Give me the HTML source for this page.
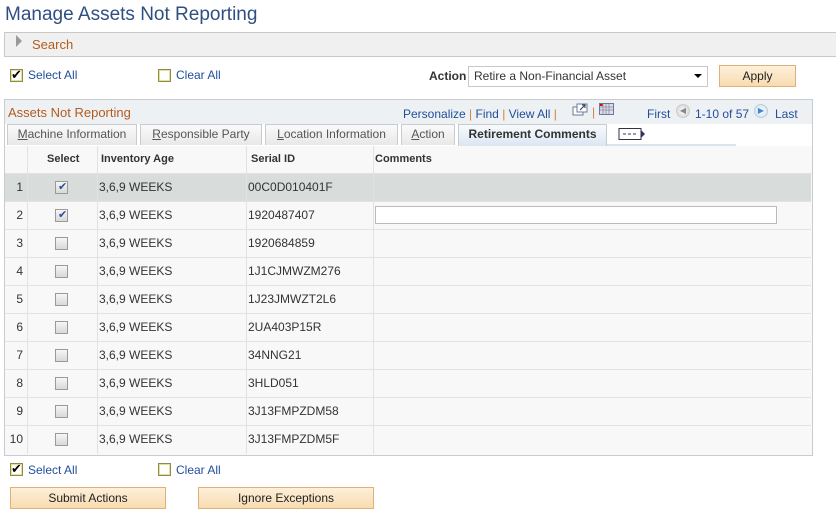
<!DOCTYPE html>
<html><head><style>
*{margin:0;padding:0;box-sizing:border-box}
body{width:836px;height:520px;background:#fff;font-family:"Liberation Sans",Arial,sans-serif;font-size:12px;color:#333;position:relative;overflow:hidden}
.a{position:absolute}
.lnk{color:#1f4e9c}
.cb{position:absolute;width:13px;height:13px;border:1px solid #8a8a5a;background:#fff;box-shadow:inset 0 0 0 1px #e8e08a}
.cb.ck::after{content:"\2714";position:absolute;left:0;top:-3px;font-size:13px;color:#000}
.gcb{position:absolute;width:13px;height:13px;border:1px solid #9a9a9a;background:linear-gradient(#f6f6f6,#d8d8d8)}
.gcb.ck::after{content:"\2714";position:absolute;left:2px;top:-2px;font-size:11px;color:#2a4f9a}
.btn{position:absolute;height:22px;border:1px solid #e0b07a;background:linear-gradient(#fdf0da,#f8dcb0);text-align:center;line-height:20px;color:#222}
.tab{position:absolute;top:124px;height:21px;border:1px solid #c8ccd0;border-bottom:none;background:linear-gradient(#fafafa,#e8e8e8);color:#555;line-height:19px;text-align:center}
.row{position:absolute;left:5px;width:806px;height:28px;border-bottom:1px solid #e2e2e2;background:#f8f8f8}
.row div{position:absolute;top:0;line-height:27px;color:#333}
.row div.n{left:0;width:18px;text-align:right}
.vl{position:absolute;top:146px;width:1px;height:308px;background:#e2e2e2}
</style></head><body>
<div class="a" style="left:5px;top:4px;font-size:19px;color:#2f4f82">Manage Assets Not Reporting</div>
<div class="a" style="left:4px;top:32px;width:832px;height:25px;background:#f0f0f0;border:1px solid #c8c8c8;border-right:none"></div>
<div class="a" style="left:16px;top:35px;width:0;height:0;border-left:6px solid #999;border-top:6px solid transparent;border-bottom:6px solid transparent"></div>
<div class="a" style="left:32px;top:37px;color:#b25c1e;font-size:13px">Search</div>

<div class="cb ck" style="left:10px;top:69px"></div><div class="a lnk" style="left:28px;top:68px">Select All</div>
<div class="cb" style="left:158px;top:69px"></div><div class="a lnk" style="left:176px;top:68px">Clear All</div>
<div class="a" style="left:429px;top:69px;font-weight:bold;color:#333">Action</div>
<div class="a" style="left:468px;top:66px;width:240px;height:21px;border:1px solid #c8c8c8;background:#fff;line-height:19px;padding-left:5px">Retire a Non-Financial Asset</div>
<div class="a" style="left:694px;top:74px;border-left:4px solid transparent;border-right:4px solid transparent;border-top:4px solid #000"></div>
<div class="btn" style="left:719px;top:65px;width:77px">Apply</div>

<div class="a" style="left:4px;top:99px;width:809px;height:357px;border:1px solid #c8ccd0;background:#f8f8f8"></div>
<div class="a" style="left:5px;top:100px;width:807px;height:24px;background:#eef1f3"></div>
<div class="a" style="left:5px;top:124px;width:807px;height:22px;background:#fff"></div>
<div class="a" style="left:8px;top:105px;color:#b25c1e;font-size:13px">Assets Not Reporting</div>
<div class="a lnk" style="left:403px;top:107px"><span>Personalize</span> <span style="color:#d08040">|</span> Find <span style="color:#d08040">|</span> View All <span style="color:#d08040">|</span></div>
<svg class="a" style="left:572px;top:103px" width="16" height="14"><rect x="1" y="4" width="10" height="8" fill="#fff" stroke="#6a7a9a"/><rect x="5" y="1" width="10" height="8" fill="#fff" stroke="#6a7a9a"/><path d="M8 7l5-5M10 2h3v3" stroke="#335" fill="none"/></svg>
<div class="a" style="left:592px;top:105px;color:#d08040">|</div>
<svg class="a" style="left:599px;top:103px" width="15" height="12"><rect x="0.5" y="0.5" width="14" height="11" fill="#dde" stroke="#6a7a9a"/><rect x="1" y="1" width="3" height="2" fill="#e00"/><path d="M1 4h13M1 7h13M4 1v10M7 1v10M10 1v10" stroke="#99a"/></svg>
<div class="a lnk" style="left:647px;top:107px">First</div>
<div class="a" style="left:676px;top:104px;width:14px;height:14px;border-radius:50%;background:radial-gradient(#fff,#ccc);border:1px solid #ccc;font-size:8px;color:#888;text-align:center;line-height:12px">◀</div>
<div class="a lnk" style="left:695px;top:107px">1-10 of 57</div>
<div class="a" style="left:754px;top:104px;width:14px;height:14px;border-radius:50%;background:radial-gradient(#fff,#cde);border:1px solid #bcd;font-size:8px;color:#48c;text-align:center;line-height:12px">▶</div>
<div class="a lnk" style="left:775px;top:107px">Last</div>

<div class="tab" style="left:7px;width:130px"><u>M</u>achine Information</div>
<div class="tab" style="left:140px;width:122px"><u>R</u>esponsible Party</div>
<div class="tab" style="left:265px;width:133px"><u>L</u>ocation Information</div>
<div class="tab" style="left:401px;width:54px"><u>A</u>ction</div>
<div class="tab" style="left:458px;width:149px;background:linear-gradient(#f8fafc,#dbe6f2);font-weight:bold;color:#333;height:22px">Retirement Comments</div>
<div class="a" style="left:607px;top:144px;width:129px;height:2px;background:#dbe4ee"></div>
<svg class="a" style="left:618px;top:127px" width="28" height="14"><rect x="1" y="1.5" width="22" height="11" fill="#fff" stroke="#334"/><path d="M5 7h3M10 7h3M15 7h3" stroke="#335"/><path d="M23 3l4 4-4 4z" fill="#335"/></svg>

<div class="a" style="left:5px;top:146px;width:807px;height:28px;background:#f8f8f8;border-bottom:1px solid #e2e2e2"></div>
<div class="a" style="left:47px;top:153px;font-weight:bold;font-size:11px;color:#333">Select</div>
<div class="a" style="left:101px;top:153px;font-weight:bold;font-size:11px;color:#333">Inventory Age</div>
<div class="a" style="left:251px;top:153px;font-weight:bold;font-size:11px;color:#333">Serial ID</div>
<div class="a" style="left:375px;top:153px;font-weight:bold;font-size:11px;color:#333">Comments</div>

<div class="row" style="top:174px;background:#d8dcdb"><div class="n">1</div><span class="gcb ck" style="left:50px;top:7px"></span><div style="left:94px">3,6,9 WEEKS</div><div style="left:243px">00C0D010401F</div></div>
<div class="row" style="top:202px"><div class="n">2</div><span class="gcb ck" style="left:50px;top:7px"></span><div style="left:94px">3,6,9 WEEKS</div><div style="left:243px">1920487407</div><span style="position:absolute;left:370px;top:4px;width:402px;height:18px;border:1px solid #bbb;background:#fff"></span></div>
<div class="row" style="top:230px"><div class="n">3</div><span class="gcb" style="left:50px;top:7px"></span><div style="left:94px">3,6,9 WEEKS</div><div style="left:243px">1920684859</div></div>
<div class="row" style="top:258px"><div class="n">4</div><span class="gcb" style="left:50px;top:7px"></span><div style="left:94px">3,6,9 WEEKS</div><div style="left:243px">1J1CJMWZM276</div></div>
<div class="row" style="top:286px"><div class="n">5</div><span class="gcb" style="left:50px;top:7px"></span><div style="left:94px">3,6,9 WEEKS</div><div style="left:243px">1J23JMWZT2L6</div></div>
<div class="row" style="top:314px"><div class="n">6</div><span class="gcb" style="left:50px;top:7px"></span><div style="left:94px">3,6,9 WEEKS</div><div style="left:243px">2UA403P15R</div></div>
<div class="row" style="top:342px"><div class="n">7</div><span class="gcb" style="left:50px;top:7px"></span><div style="left:94px">3,6,9 WEEKS</div><div style="left:243px">34NNG21</div></div>
<div class="row" style="top:370px"><div class="n">8</div><span class="gcb" style="left:50px;top:7px"></span><div style="left:94px">3,6,9 WEEKS</div><div style="left:243px">3HLD051</div></div>
<div class="row" style="top:398px"><div class="n">9</div><span class="gcb" style="left:50px;top:7px"></span><div style="left:94px">3,6,9 WEEKS</div><div style="left:243px">3J13FMPZDM58</div></div>
<div class="row" style="top:426px;border-bottom:none"><div class="n">10</div><span class="gcb" style="left:50px;top:7px"></span><div style="left:94px">3,6,9 WEEKS</div><div style="left:243px">3J13FMPZDM5F</div></div>
<div class="vl" style="left:27px"></div><div class="vl" style="left:97px"></div><div class="vl" style="left:246px"></div><div class="vl" style="left:373px"></div>

<div class="cb ck" style="left:10px;top:463px"></div><div class="a lnk" style="left:28px;top:463px">Select All</div>
<div class="cb" style="left:158px;top:463px"></div><div class="a lnk" style="left:176px;top:463px">Clear All</div>
<div class="btn" style="left:10px;top:487px;width:156px">Submit Actions</div>
<div class="btn" style="left:198px;top:487px;width:176px">Ignore Exceptions</div>
</body></html>
